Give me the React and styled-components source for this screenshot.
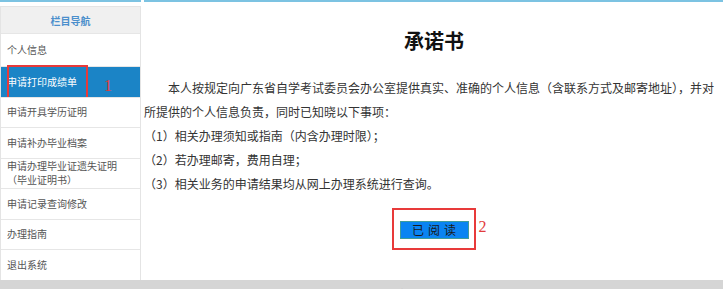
import React from "react";
import styled, { createGlobalStyle } from "styled-components";

const GlobalStyle = createGlobalStyle`
  html, body {
    margin: 0;
    padding: 0;
    background: #fff;
    font-family: "Noto Sans CJK SC", "Noto Sans", sans-serif;
    overflow: hidden;
  }
`;

const Page = styled.div`
  display: flex;
  flex-direction: column;
  width: 723px;
`;

const Body = styled.div`
  display: flex;
  gap: 3px;
  height: 280px;
`;

const Sidebar = styled.aside`
  width: 141px;
  flex-shrink: 0;
  border-top: 2px solid #7cc3e2;
  padding-top: 4px;
  box-sizing: border-box;
  display: flex;
  flex-direction: column;
`;

const NavBox = styled.nav`
  flex: 1;
  width: 139px;
  border: 1px solid #e4e4e4;
  border-bottom: none;
  display: flex;
  flex-direction: column;
`;

const NavHeader = styled.div`
  height: 26px;
  background: #f0f0f0;
  color: #4b8fcc;
  font-size: 10px;
  font-weight: 700;
  display: flex;
  align-items: center;
  justify-content: center;
`;

const NavItem = styled.div`
  position: relative;
  height: ${(p) => (p.$first ? "32px" : "29.5px")};
  border-top: 1px solid #e6e6e6;
  padding-left: 6px;
  display: flex;
  flex-direction: column;
  justify-content: center;
  font-size: 10px;
  line-height: 14px;
  color: ${(p) => (p.$active ? "#fff" : "#555")};
  background: ${(p) => (p.$active ? "#1b84c6" : "#fff")};
`;

const RedFrame = styled.div`
  position: absolute;
  border: 2px solid #e83a3a;
  box-sizing: border-box;
  pointer-events: none;
`;

const ItemFrame = styled(RedFrame)`
  left: 6px;
  top: -2px;
  width: 81px;
  height: 36px;
`;

const Mark = styled.span`
  position: absolute;
  font-family: "Liberation Serif", serif;
  font-size: 16px;
  line-height: 16px;
  color: #e23c3c;
`;

const ItemMark = styled(Mark)`
  left: 103px;
  top: 11px;
`;

const Main = styled.main`
  flex: 1;
  border-top: 2px solid #7cc3e2;
  padding: 29px 3px 0 0;
  color: #333;
`;

const Title = styled.h1`
  margin: 0;
  text-align: center;
  font-size: 20px;
  line-height: 20px;
  font-weight: 700;
  color: #111;
  padding-left: 4px;
`;

const Text = styled.div`
  margin-top: 25px;
  font-size: 12px;
  line-height: 24px;
`;

const Para = styled.p`
  margin: 0;
  text-indent: ${(p) => (p.$indent ? "2em" : "0")};
`;

const ButtonRow = styled.div`
  display: flex;
  justify-content: center;
  margin-top: 20px;
  padding-left: 4px;
`;

const ButtonWrap = styled.div`
  position: relative;
`;

const ButtonFrame = styled(RedFrame)`
  left: -8px;
  top: -8px;
  right: -7px;
  bottom: -10px;
`;

const ButtonMark = styled(Mark)`
  left: 79px;
  top: 3px;
`;

const ReadButton = styled.button`
  width: 69px;
  height: 18px;
  padding: 0;
  border: 1px solid #3f9c9a;
  background: #0a84f2;
  color: #1a1a1a;
  font-family: "Noto Sans CJK SC", sans-serif;
  font-size: 12px;
  line-height: 16px;
  letter-spacing: 4px;
  text-indent: 4px;
  cursor: pointer;
`;

const Footer = styled.footer`
  height: 9px;
  overflow: hidden;
  background: #d5d5d5;
  color: #8a8a8a;
  font-size: 11px;
  line-height: 16px;
  padding: 6px 0 0 282px;
  box-sizing: border-box;
`;

const menu = [
  { label: "个人信息" },
  { label: "申请打印成绩单", active: true },
  { label: "申请开具学历证明" },
  { label: "申请补办毕业档案" },
  { label: ["申请办理毕业证遗失证明", "（毕业证明书）"] },
  { label: "申请记录查询修改" },
  { label: "办理指南" },
  { label: "退出系统" },
];

const App = () => {
  return (
    <Page>
      <GlobalStyle />
      <Body>
        <Sidebar>
          <NavBox>
            <NavHeader>栏目导航</NavHeader>
            {menu.map((m, i) => (
              <NavItem key={i} $first={i === 0} $active={m.active}>
                {Array.isArray(m.label)
                  ? m.label.map((l) => <span key={l}>{l}</span>)
                  : m.label}
                {m.active && (
                  <>
                    <ItemFrame />
                    <ItemMark>1</ItemMark>
                  </>
                )}
              </NavItem>
            ))}
          </NavBox>
        </Sidebar>

        <Main>
          <Title>承诺书</Title>
          <Text>
            <Para $indent>
              本人按规定向广东省自学考试委员会办公室提供真实、准确的个人信息（含联系方式及邮寄地址），并对所提供的个人信息负责，同时已知晓以下事项：
            </Para>
            <Para>（1）相关办理须知或指南（内含办理时限）；</Para>
            <Para>（2）若办理邮寄，费用自理；</Para>
            <Para>（3）相关业务的申请结果均从网上办理系统进行查询。</Para>
          </Text>
          <ButtonRow>
            <ButtonWrap>
              <ReadButton>已阅读</ReadButton>
              <ButtonFrame />
              <ButtonMark>2</ButtonMark>
            </ButtonWrap>
          </ButtonRow>
        </Main>
      </Body>
      <Footer>©2019 广东省教育考试院 版权所有</Footer>
    </Page>
  );
};

export default App;
